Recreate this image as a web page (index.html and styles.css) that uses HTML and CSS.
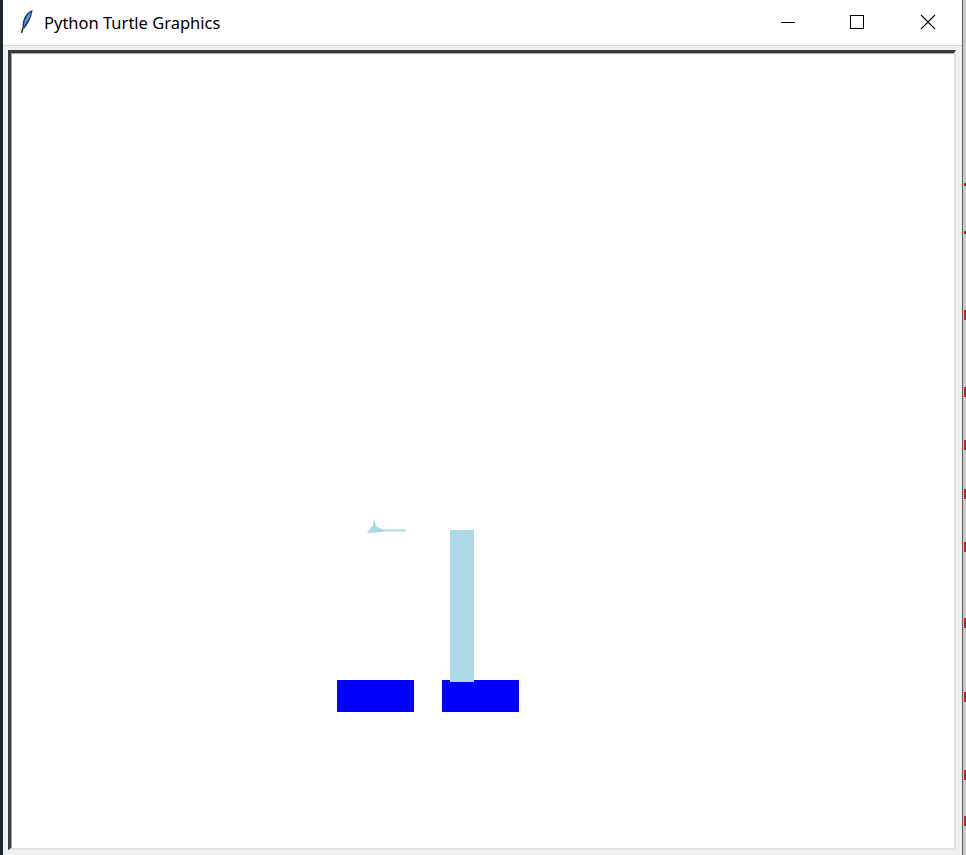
FILE: index.html
```html
<!DOCTYPE html>
<html>
<head>
<meta charset="utf-8">
<title>Python Turtle Graphics</title>
<link rel="stylesheet" href="styles.css">
</head>
<body>
<div class="desk">
  <div class="desk-left"></div>
  <div class="window">
    <div class="titlebar">
      <div class="title-left">
        <svg class="app-icon" width="14" height="26" viewBox="0 0 14 26">
          <path d="M12.5 1 C 6 3, 2 10, 2.5 19 L 4 20 C 8 15, 12 8, 12.5 1 Z" fill="#1d3f7a"/>
          <path d="M11.5 3 C 7 6, 4.5 11, 4 17 C 7 12, 10 8, 11.5 3 Z" fill="#6fa3e0"/>
          <path d="M3 19 L 1.5 24" stroke="#222" stroke-width="1.4"/>
        </svg>
        <span class="title-text">Python Turtle Graphics</span>
      </div>
      <div class="controls">
        <div class="ctl ctl-min"><svg width="16" height="16" viewBox="0 0 16 16"><path d="M1 8.5 H15" stroke="#000" stroke-width="1"/></svg></div>
        <div class="ctl ctl-max"><svg width="16" height="16" viewBox="0 0 16 16"><rect x="1.5" y="1.5" width="13" height="13" fill="none" stroke="#000" stroke-width="1"/></svg></div>
        <div class="ctl ctl-close"><svg width="16" height="16" viewBox="0 0 16 16"><path d="M1 1 L15 15 M15 1 L1 15" stroke="#000" stroke-width="1.1"/></svg></div>
      </div>
    </div>
    <div class="frame">
      <div class="canvas">
        <svg class="drawing" width="945" height="795" viewBox="0 0 945 795">
          <rect x="326" y="627" width="77" height="32" fill="#0000ff"/>
          <rect x="431" y="627" width="77" height="32" fill="#0000ff"/>
          <rect x="439" y="477" width="24" height="152" fill="#add8e6"/>
          <line x1="370" y1="477.5" x2="395" y2="477.5" stroke="#add8e6" stroke-width="2"/>
          <polygon points="363,465 362,472 356,480 372,479 372,477 365,473" fill="#add8e6"/>
        </svg>
      </div>
    </div>
  </div>
  <div class="desk-right">
    <span class="mark" style="top:183px"></span>
    <span class="mark" style="top:231px"></span>
    <span class="mark tall" style="top:310px"></span>
    <span class="mark tall" style="top:387px"></span>
    <span class="mark tall" style="top:440px"></span>
    <span class="mark tall" style="top:489px"></span>
    <span class="mark tall" style="top:542px"></span>
    <span class="mark tall" style="top:618px"></span>
    <span class="mark tall" style="top:692px"></span>
    <span class="mark tall" style="top:770px"></span>
    <span class="mark tall" style="top:816px"></span>
  </div>
</div>
</body>
</html>
```

FILE: styles.css
```css
html, body {
  margin: 0;
  padding: 0;
  width: 966px;
  height: 855px;
  overflow: hidden;
  background: #f0f0f0;
}

.desk {
  display: flex;
  width: 966px;
  height: 855px;
}

.desk-left {
  width: 3px;
  flex: none;
  background: #1c262d;
}

.window {
  width: 959px;
  flex: none;
  display: flex;
  flex-direction: column;
  background: #f0f0f0;
}

.titlebar {
  height: 45px;
  flex: none;
  background: #ffffff;
  border-bottom: 1px solid #d9d9d9;
  display: flex;
  align-items: center;
  justify-content: space-between;
}

.title-left {
  display: flex;
  align-items: center;
  padding-left: 17px;
  gap: 10px;
}

.app-icon {
  display: block;
  margin-top: -2px;
}

.title-text {
  font-family: "Noto Sans", "Open Sans", sans-serif;
  font-size: 16.5px;
  color: #000;
  margin-top: -1px;
}

.controls {
  display: flex;
  height: 45px;
}

.ctl {
  height: 45px;
  display: flex;
  align-items: center;
  justify-content: center;
}

.ctl svg {
  display: block;
  margin-top: -1px;
}

.ctl-min {
  width: 64px;
}

.ctl-max {
  width: 74px;
}

.ctl-close {
  width: 68px;
}

.frame {
  flex: 1;
  padding: 4px 6px 5px 5px;
  display: flex;
}

.canvas {
  position: relative;
  width: 945px;
  height: 795px;
  background: #ffffff;
  border-top: 3px solid #3a3a3a;
  border-left: 3px solid #3a3a3a;
  border-right: 2px solid #e3e3e3;
  border-bottom: 2px solid #e3e3e3;
  box-shadow: inset 1px 1px 0 #a0a0a0;
}

.drawing {
  position: absolute;
  left: 0;
  top: 0;
  display: block;
}

.desk-right {
  position: relative;
  flex: 1;
  background: #c8c8c8;
  border-left: 1px solid #5c5c5c;
}

.mark {
  position: absolute;
  left: 1px;
  width: 3px;
  height: 3px;
  background: #b3262a;
}

.mark.tall {
  height: 10px;
}
```
